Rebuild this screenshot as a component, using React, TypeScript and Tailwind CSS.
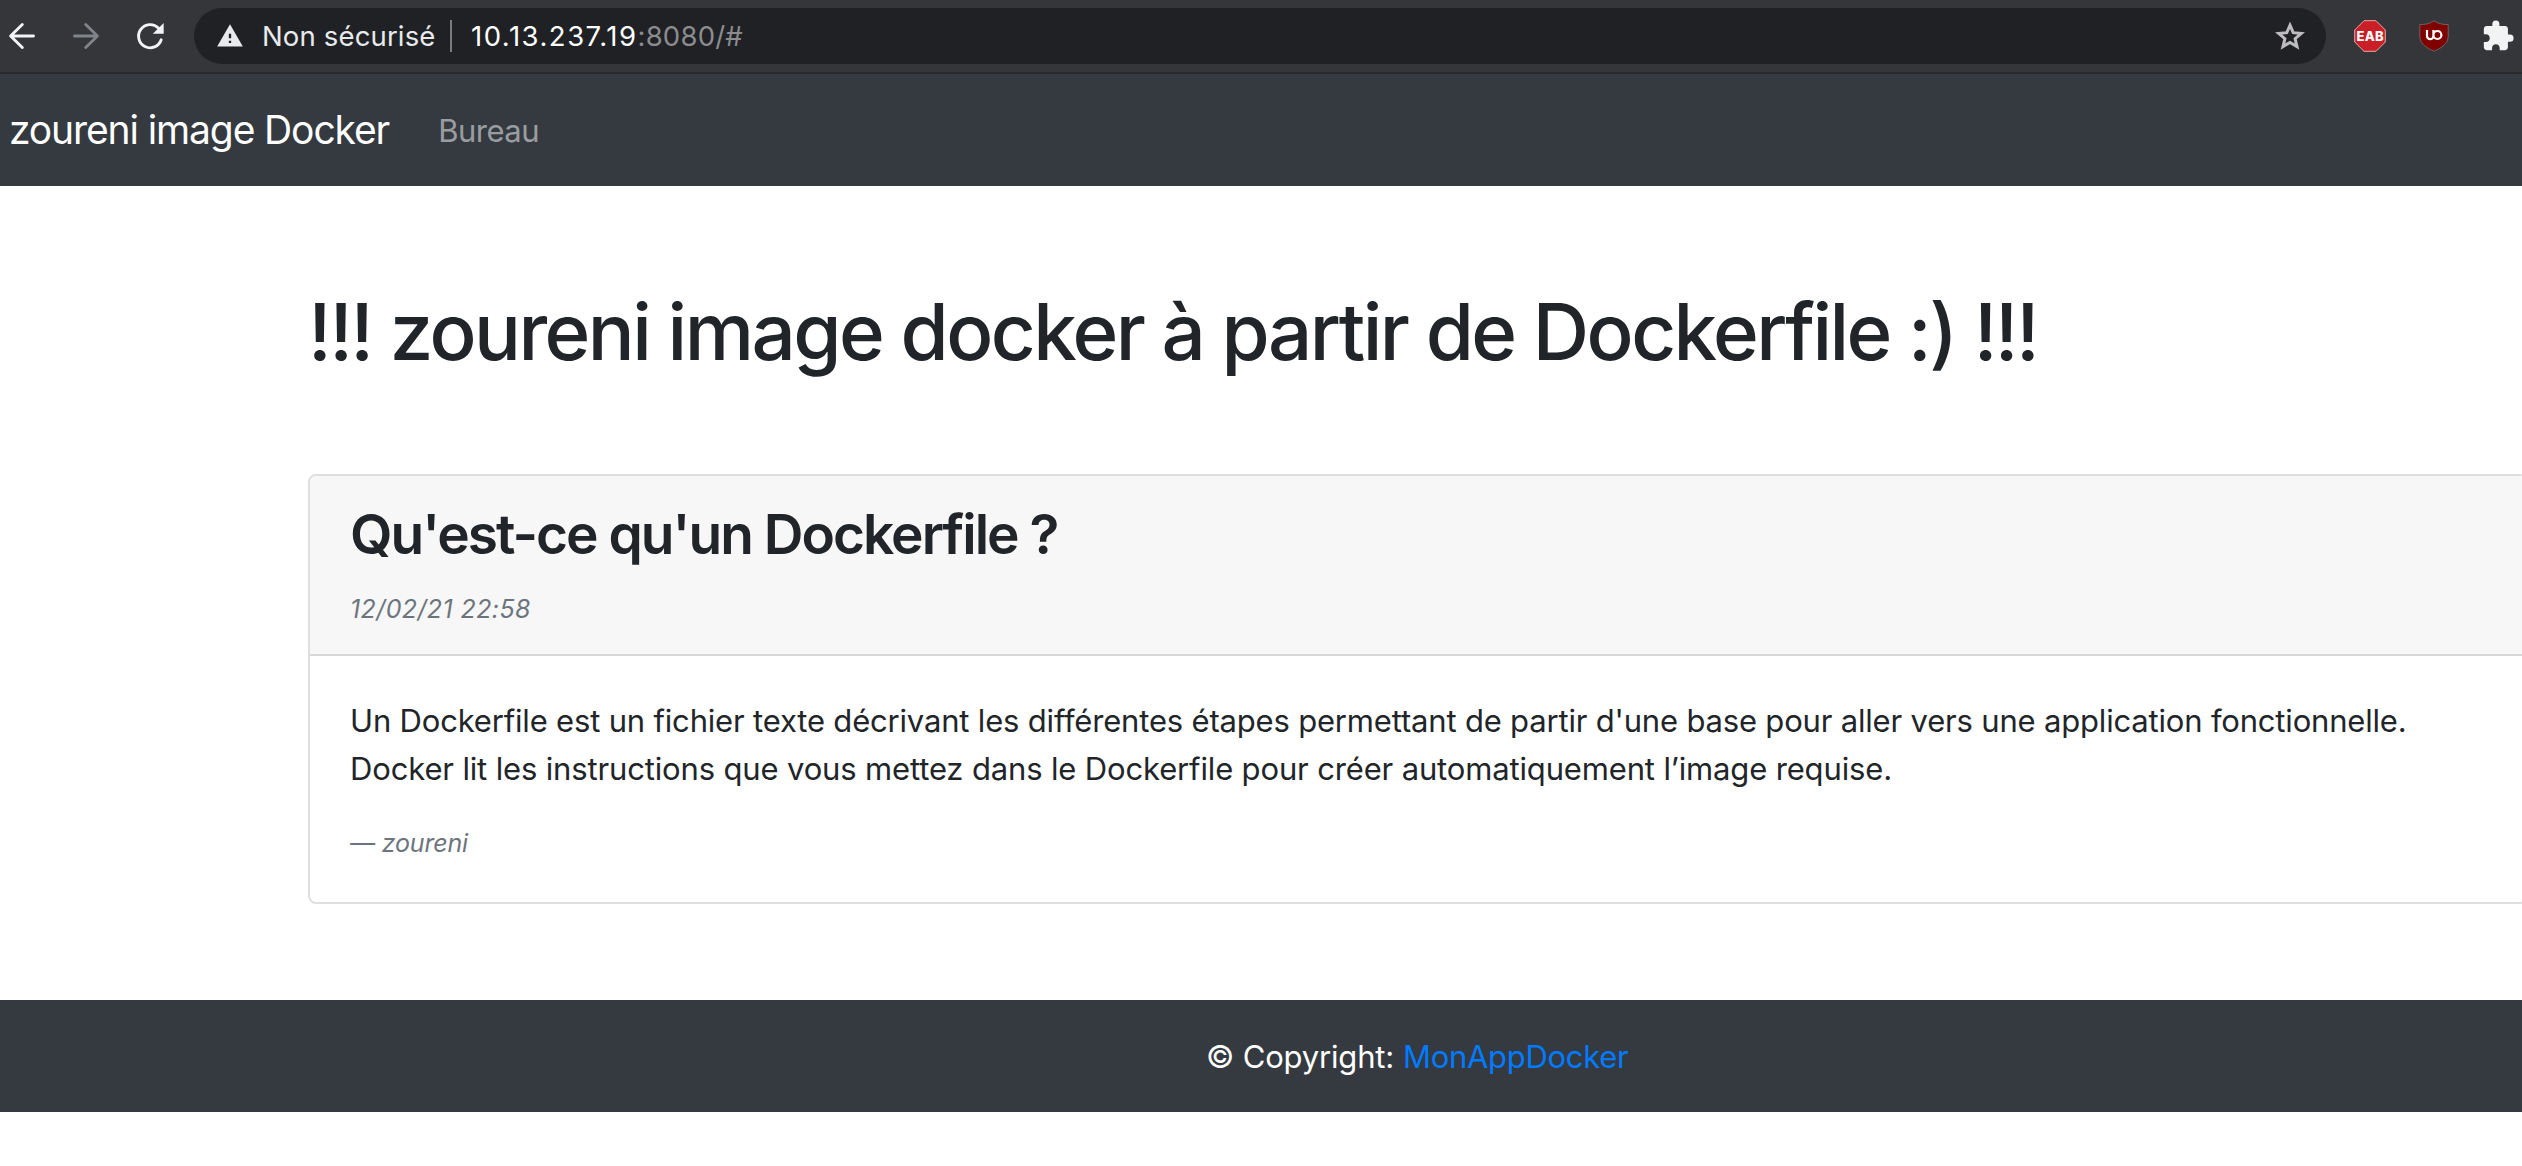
import { MdWarning, MdExtension } from "react-icons/md";

function Arrow({ className }: { className: string }) {
  return (
    <svg className={className} viewBox="0 0 32 32" fill="none" stroke="currentColor" strokeWidth="2.9" strokeLinecap="round" strokeLinejoin="round">
      <path d="M27.500 16H4.800M16.300 4.500L4.600 16l11.700 11.500" />
    </svg>
  );
}

function Reload() {
  return (
    <svg className="size-8 shrink-0 text-[#f1f3f4]" viewBox="0 0 32 32">
      <path d="M27.200 19.800A11.600 11.600 0 1 1 24.400 8" fill="none" stroke="currentColor" strokeWidth="2.9" strokeLinecap="round" />
      <path d="M29.700 3v10.700H18.800z" fill="currentColor" />
    </svg>
  );
}

function Star() {
  return (
    <svg className="ml-auto size-9 text-[#bdbdbf]" viewBox="0 0 36 36" fill="none" stroke="currentColor" strokeWidth="3">
      <path d="M18 7.200l3.200 7.500 8.100.7-6.200 5.300 1.900 7.900-7-4.200-7 4.200 1.900-7.900-6.200-5.300 8.100-.7z" />
    </svg>
  );
}

function Toolbar() {
  return (
    <div className="flex h-[74px] items-start border-b-2 border-[#292a2d] bg-[#35363a]">
      <div className="flex h-[72px] w-[194px] shrink-0 items-center gap-8 pl-[6px]">
        <Arrow className="size-8 shrink-0 text-[#f1f3f4]" />
        <Arrow className="size-8 shrink-0 rotate-180 text-[#808387]" />
        <Reload />
      </div>
      <div className="mt-2 flex h-14 w-[2132px] shrink-0 items-center rounded-full bg-[#202124] pl-[22px] pr-[18px] text-[27.500px] leading-none whitespace-nowrap">
        <MdWarning className="size-7 text-[#e8eaed]" />
        <span className="ml-[18px] w-[173px] pt-px tracking-[0.150px] text-[#e8eaed]">Non sécurisé</span>
        <span className="ml-[15px] h-8 w-0.5 bg-[#7a7b7e]" />
        <span className="ml-[19px] pt-px tracking-[1.500px] text-white">10.13.237.19</span>
        <span className="pt-px tracking-[0.200px] text-[#8b8c8f]">:8080/#</span>
        <Star />
      </div>
      <svg className="mt-5 ml-7 size-8 shrink-0" viewBox="0 0 32 32">
        <path d="M10 .7h12l9.3 9.3v12L22 31.3H10L.7 22V10z" fill="#cb1f27" stroke="#e9a9a6" strokeWidth="1" />
        <text x="16" y="20.700" textAnchor="middle" fontSize="13" fontWeight="800" fill="#fff" textLength="27">EAB</text>
      </svg>
      <svg className="mt-5 ml-8 size-8 shrink-0" viewBox="0 0 32 32">
        <path d="M16 .8C12 3.800 7 4.600 1.800 4.600V16c0 8 7 12 14.200 15.200C23.200 28 30.200 24 30.200 16V4.600C25 4.600 20 3.800 16 .8z" fill="#800000" stroke="#6b6364" />
        <path d="M9 10v6a3.200 3.200 0 0 0 6.400 0v-6M15.400 15a4 4 0 1 0 8 0a4 4 0 1 0-8 0" fill="none" stroke="#fff" strokeWidth="2.200" />
      </svg>
      <MdExtension className="mt-[19px] ml-[31px] size-[34px] shrink-0 text-[#f1f3f4]" />
    </div>
  );
}

export default function App() {
  return (
    <div className="h-[1166px] w-full overflow-hidden bg-white font-['Inter',sans-serif] text-[31px] leading-[48px] tracking-[-0.180px] text-[#212529]">
      <Toolbar />
      <nav className="flex h-28 items-center bg-[#343a40] pl-[9px] whitespace-nowrap">
        <a className="text-[39px] leading-[60px] tracking-[-1.120px] text-white">zoureni image Docker</a>
        <a className="ml-[49px] pt-0.5 tracking-[-0.500px] text-[#9a9da0]">Bureau</a>
      </nav>
      <main className="w-[2528px] pl-[308px]">
        <h1 className="pt-[98px] text-[78px] leading-[96px] font-medium tracking-[-2.550px] whitespace-nowrap">
          !!! zoureni image docker à partir de Dockerfile :) !!!
        </h1>
        <article className="mt-[94px] h-[430px] w-[2220px] rounded-lg border-2 border-[#dfdfdf]">
          <header className="h-[180px] rounded-t-md border-b-2 border-[#d8d8d8] bg-[#f7f7f7] px-10 pt-[25px]">
            <h2 className="text-[55px] leading-[67px] font-semibold tracking-[-1.980px]">Qu'est-ce qu'un Dockerfile ?</h2>
            <p className="mt-[17px] text-[25px] leading-[48px] tracking-[0.400px] text-[#6c757d] italic">12/02/21 22:58</p>
          </header>
          <div className="px-10 pt-[41px] whitespace-nowrap">
            <p>Un Dockerfile est un fichier texte décrivant les différentes étapes permettant de partir d'une base pour aller vers une application fonctionnelle.</p>
            <p className="tracking-[-0.150px]">Docker lit les instructions que vous mettez dans le Dockerfile pour créer automatiquement l’image requise.</p>
            <p className="mt-[31px] text-[25px] leading-[38px] text-[#6c757d] italic">— zoureni</p>
          </div>
        </article>
      </main>
      <footer className="mt-24 flex h-28 items-center bg-[#343a40] pt-0.5 pl-[1206px] whitespace-nowrap text-white">
        <span>© Copyright:</span>
        <a className="ml-[9px] tracking-[-0.300px] text-[#007bff]">MonAppDocker</a>
      </footer>
    </div>
  );
}
